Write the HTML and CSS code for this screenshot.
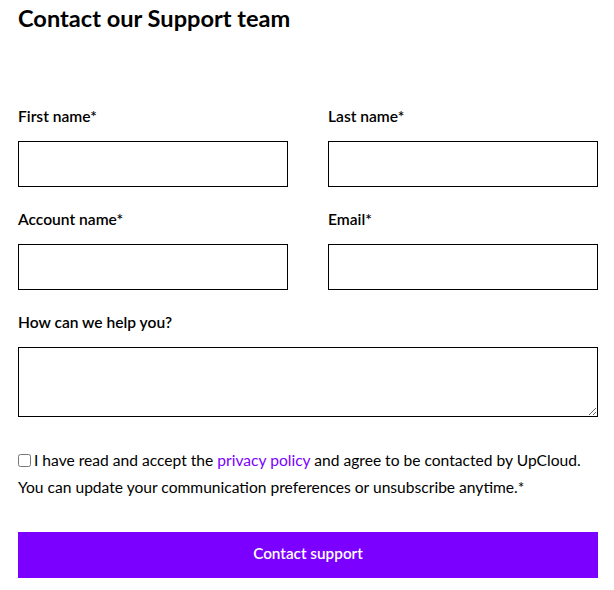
FILE: index.html
```html
<!DOCTYPE html>
<html lang="en">
<head>
<meta charset="utf-8">
<title>Contact our Support team</title>
<link rel="stylesheet" href="styles.css">
</head>
<body>
<main class="page">
  <h1 class="title">Contact our Support team</h1>
  <form class="form">
    <div class="grid">
      <div class="field">
        <label class="label" for="first">First name*</label>
        <input class="input" id="first" type="text">
      </div>
      <div class="field">
        <label class="label" for="last">Last name*</label>
        <input class="input" id="last" type="text">
      </div>
      <div class="field">
        <label class="label" for="account">Account name*</label>
        <input class="input" id="account" type="text">
      </div>
      <div class="field">
        <label class="label" for="email">Email*</label>
        <input class="input" id="email" type="email">
      </div>
      <div class="field field-wide">
        <label class="label" for="help">How can we help you?</label>
        <textarea class="textarea" id="help"></textarea>
      </div>
    </div>
    <div class="consent">
      <div class="consent-line"><input class="check" type="checkbox" id="consent"><label for="consent"><span>I have read and accept the </span><a class="link" href="#">privacy policy</a><span> and agree to be contacted by UpCloud.</span></label></div>
      <div class="consent-line">You can update your communication preferences or unsubscribe anytime.*</div>
    </div>
    <button class="submit" type="button">Contact support</button>
  </form>
</main>
</body>
</html>
```
FILE: styles.css
```css
* { box-sizing: border-box; }
body {
  margin: 0;
  background: #fff;
  color: #000;
  font-family: "Lato", "Liberation Sans", sans-serif;
}
.page {
  width: 580px;
  margin: 0 0 0 18px;
  padding-top: 4px;
}
.title {
  margin: 0;
  font-size: 23.6px;
  font-weight: 700;
  line-height: 28px;
}
.form {
  margin-top: 74px;
}
.grid {
  display: grid;
  grid-template-columns: 270px 270px;
  column-gap: 40px;
  row-gap: 22px;
}
.field {
  display: flex;
  flex-direction: column;
}
.field-wide {
  grid-column: 1 / -1;
}
.label {
  font-size: 15.6px;
  font-weight: 600;
  line-height: 20px;
  margin-bottom: 15px;
}
.input,
.textarea {
  display: block;
  width: 100%;
  border: 1px solid #000;
  border-radius: 0;
  background: #fff;
  font: inherit;
  margin: 0;
  padding: 8px 10px;
}
.input { height: 46px; }
.textarea { height: 70px; resize: vertical; }
.consent {
  margin-top: 29.5px;
  font-size: 15.6px;
  line-height: 27px;
}
.consent-line {
  white-space: nowrap;
}
.check {
  width: 13px;
  height: 13px;
  margin: 0 3px 0 0;
  vertical-align: -1px;
}
.link {
  color: #7b00ff;
  text-decoration: none;
}
.submit {
  display: block;
  width: 100%;
  height: 46px;
  margin-top: 31px;
  padding: 0 0 3px;
  border: 0;
  border-radius: 0;
  background: #7b00ff;
  color: #fff;
  font-family: inherit;
  font-size: 15.3px;
  font-weight: 600;
  cursor: pointer;
}
```
